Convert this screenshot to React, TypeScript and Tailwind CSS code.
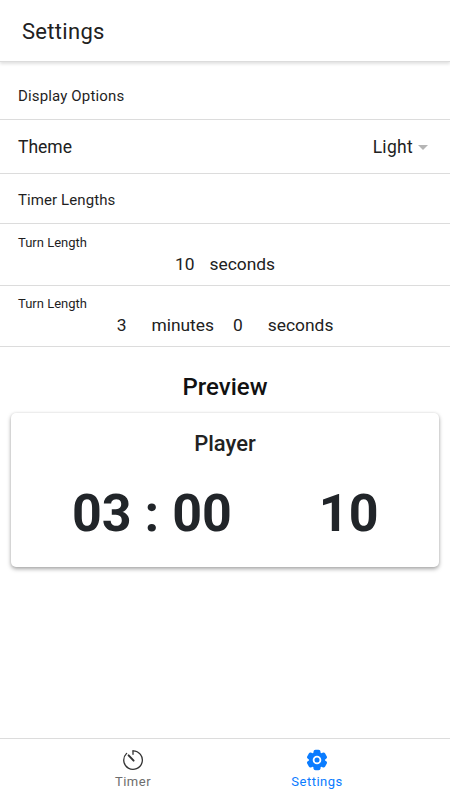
import type { ReactNode } from 'react';

function TurnRow({ className, children }: { className: string; children: ReactNode }) {
  return (
    <div className={`border-b border-[#dcdcdc] px-[18px] ${className}`}>
      <div className="text-[13px] leading-[16px] text-[#1f1f1f]">Turn Length</div>
      <div className="mt-[1px] flex h-[24px] items-center justify-center text-[17.4px] text-[#212121]">{children}</div>
    </div>
  );
}

function TimerIcon() {
  return (
    <svg width="22" height="22" viewBox="0 0 22 22" fill="none" stroke="#333333" strokeWidth="1.3" strokeLinecap="round">
      <path d="M11 1.8a9.3 9.3 0 1 1-6.4 2.6" />
      <path d="M11 1.9v3.4" />
      <path d="M6.6 6.4l5 5.2" strokeWidth="2" />
    </svg>
  );
}

function GearIcon() {
  return (
    <svg width="22" height="22" viewBox="0 0 22 22" fill="#0a7cff">
      <circle cx="11" cy="11" r="8" />
      <rect x="7.5" y="0.7" width="7" height="20.6" rx="2" />
      <rect x="7.5" y="0.7" width="7" height="20.6" rx="2" transform="rotate(60 11 11)" />
      <rect x="7.5" y="0.7" width="7" height="20.6" rx="2" transform="rotate(120 11 11)" />
      <circle cx="11" cy="11" r="4.3" fill="#ffffff" />
      <circle cx="11" cy="11" r="2.5" />
    </svg>
  );
}

export default function App() {
  return (
    <div className="flex h-[800px] w-[450px] flex-col bg-white font-['Roboto',sans-serif]">
      <header className="flex h-[62px] shrink-0 items-center border-b border-[#dcdcdc] px-[22px] pt-[1px] shadow-[0_2px_3px_rgba(0,0,0,0.12)]">
        <h1 className="text-[22px] tracking-[0.3px] text-[#212121]">Settings</h1>
      </header>

      <div className="flex h-[58px] shrink-0 items-center border-b border-[#dcdcdc] px-[18px] pt-[12px] text-[15px] tracking-[0.15px] text-[#1f1f1f]">Display Options</div>

      <div className="flex h-[54px] shrink-0 items-center justify-between border-b border-[#dcdcdc] pl-[18px] pr-[22px] pt-[2px] text-[17.5px] text-[#212121]">
        <span>Theme</span>
        <span className="flex items-center gap-[5px]">
          <span className="tracking-[0.3px]">Light</span>
          <span className="h-0 w-0 border-x-[5.5px] border-t-[5px] border-x-transparent border-t-[#b5b5b5]" />
        </span>
      </div>

      <div className="flex h-[50px] shrink-0 items-center border-b border-[#dcdcdc] px-[18px] pt-[4px] text-[15px] tracking-[0.1px] text-[#1f1f1f]">Timer Lengths</div>

      <TurnRow className="h-[62px] shrink-0 pt-[11px]">
        <span>10</span>
        <span className="ml-[15px]">seconds</span>
      </TurnRow>
      <TurnRow className="h-[61px] shrink-0 pt-[10px]">
        <span>3</span>
        <span className="ml-[25px]">minutes</span>
        <span className="ml-[19px]">0</span>
        <span className="ml-[25px]">seconds</span>
      </TurnRow>

      <h2 className="mt-[24px] text-center text-[24px] leading-[32px] font-medium text-[#111111]">Preview</h2>

      <section className="mx-[11px] mt-[10px] flex h-[154px] flex-col items-center rounded-[5px] bg-white shadow-[0_2px_4px_rgba(0,0,0,0.35),0_0_3px_rgba(0,0,0,0.08)]">
        <div className="mt-[17px] text-[22px] leading-[28px] font-medium text-[#222222]">Player</div>
        <div className="mt-[26px] flex w-full items-center pl-[61px] text-[52px] leading-[60px] font-bold text-[#212529]">
          <span>03 : 00</span>
          <span className="ml-[87px]">10</span>
        </div>
      </section>

      <nav className="mt-auto flex h-[62px] shrink-0 justify-center border-t border-[#dcdcdc]">
        <div className="flex w-[184px] flex-col items-center pt-[10px] text-[#6d6d6d]">
          <TimerIcon />
          <span className="mt-[3px] text-[13px] leading-[16px] tracking-[0.5px]">Timer</span>
        </div>
        <div className="flex w-[184px] flex-col items-center pt-[10px] text-[#0a7cff]">
          <GearIcon />
          <span className="mt-[3px] text-[13px] leading-[16px] tracking-[0.5px]">Settings</span>
        </div>
      </nav>
    </div>
  );
}
